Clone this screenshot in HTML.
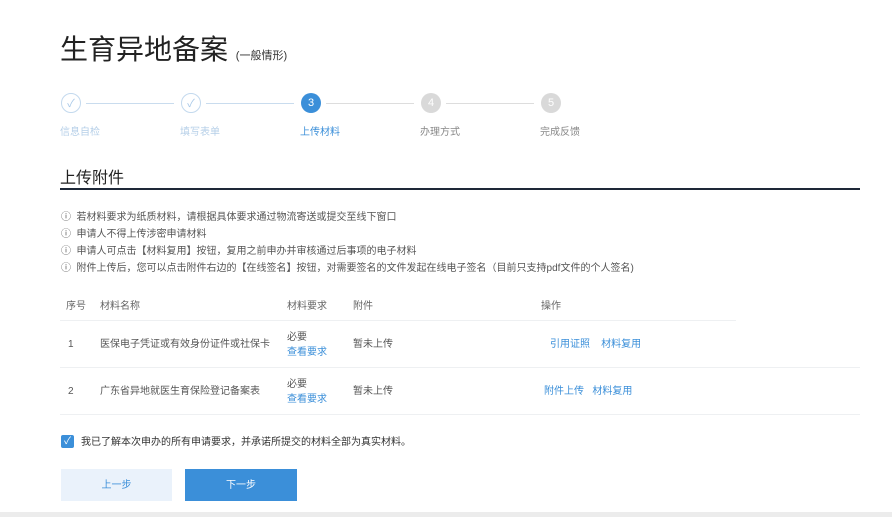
<!DOCTYPE html>
<html><head><meta charset="utf-8"><style>
*{margin:0;padding:0;box-sizing:border-box}
body{width:892px;height:517px;background:#fff;font-family:"Liberation Sans","Noto Sans CJK SC",sans-serif;position:relative;overflow:hidden;color:#333}
.a{position:absolute;white-space:nowrap}
.t{font-size:10px;color:#555;line-height:14px;margin-top:2px}
.circ{position:absolute;width:20px;height:20px;border-radius:50%;top:93px;font-size:11px;color:#fff;text-align:center;line-height:20px}
.line{position:absolute;top:103px;height:1px;background:#c9dcee;width:88px}
.lbl{position:absolute;top:123px;font-size:10px}
.blue{color:#3b8fd9}
.row{position:absolute;left:60px;width:800px;height:1px;background:#eef0f2}
.btn{position:absolute;top:469px;height:32px;font-size:10px;text-align:center;line-height:34px}
</style></head><body>
<div class="a" style="left:60px;top:28px;font-size:28px;color:#222">生育异地备案 <span style="font-size:11px;color:#333">(一般情形)</span></div>

<div class="circ" style="left:61px;border:1px solid #c3d9ee;color:#a9c9e8">✓</div>
<div class="line" style="left:86px"></div>
<div class="circ" style="left:181px;border:1px solid #c3d9ee;color:#a9c9e8">✓</div>
<div class="line" style="left:206px"></div>
<div class="circ" style="left:301px;background:#3b8fd9">3</div>
<div class="line" style="left:326px;background:#ddd"></div>
<div class="circ" style="left:421px;background:#d9d9d9">4</div>
<div class="line" style="left:446px;background:#ddd"></div>
<div class="circ" style="left:541px;background:#d9d9d9">5</div>
<div class="lbl" style="left:60px;color:#b5cfe8">信息自检</div>
<div class="lbl" style="left:180px;color:#b5cfe8">填写表单</div>
<div class="lbl" style="left:300px;color:#3b8fd9">上传材料</div>
<div class="lbl" style="left:420px;color:#888">办理方式</div>
<div class="lbl" style="left:540px;color:#888">完成反馈</div>

<div class="a" style="left:60px;top:164px;font-size:16px;color:#222">上传附件</div>
<div class="a" style="left:60px;top:188px;width:800px;height:2px;background:#1e2838"></div>

<div class="a t" style="left:61px;top:209px">ⓘ&nbsp; 若材料要求为纸质材料，请根据具体要求通过物流寄送或提交至线下窗口</div>
<div class="a t" style="left:61px;top:226px">ⓘ&nbsp; 申请人不得上传涉密申请材料</div>
<div class="a t" style="left:61px;top:243px">ⓘ&nbsp; 申请人可点击【材料复用】按钮，复用之前申办并审核通过后事项的电子材料</div>
<div class="a t" style="left:61px;top:260px">ⓘ&nbsp; 附件上传后，您可以点击附件右边的【在线签名】按钮，对需要签名的文件发起在线电子签名（目前只支持pdf文件的个人签名)</div>

<div class="a t" style="left:66px;top:298px;color:#666">序号</div>
<div class="a t" style="left:100px;top:298px;color:#666">材料名称</div>
<div class="a t" style="left:287px;top:298px;color:#666">材料要求</div>
<div class="a t" style="left:353px;top:298px;color:#666">附件</div>
<div class="a t" style="left:541px;top:298px;color:#666">操作</div>
<div class="row" style="top:320px;width:676px"></div>

<div class="a t" style="left:68px;top:336px">1</div>
<div class="a t" style="left:100px;top:336px">医保电子凭证或有效身份证件或社保卡</div>
<div class="a t" style="left:287px;top:329px">必要</div>
<div class="a t blue" style="left:287px;top:344px">查看要求</div>
<div class="a t" style="left:353px;top:336px">暂未上传</div>
<div class="a t blue" style="left:550px;top:336px">引用证照&nbsp;&nbsp;&nbsp; 材料复用</div>
<div class="row" style="top:367px"></div>

<div class="a t" style="left:68px;top:383px">2</div>
<div class="a t" style="left:100px;top:383px">广东省异地就医生育保险登记备案表</div>
<div class="a t" style="left:287px;top:376px">必要</div>
<div class="a t blue" style="left:287px;top:391px">查看要求</div>
<div class="a t" style="left:353px;top:383px">暂未上传</div>
<div class="a t blue" style="left:544px;top:383px">附件上传&nbsp;&nbsp; 材料复用</div>
<div class="row" style="top:414px"></div>

<div class="a" style="left:61px;top:435px;width:13px;height:13px;background:#3b8fd9;border-radius:2px;color:#fff;font-size:10px;line-height:13px;text-align:center">✓</div>
<div class="a t" style="left:81px;top:434px;color:#333">我已了解本次申办的所有申请要求，并承诺所提交的材料全部为真实材料。</div>

<div class="btn" style="left:61px;width:111px;background:#eaf2fb;color:#3b8fd9">上一步</div>
<div class="btn" style="left:185px;width:112px;background:#3b8fd9;color:#fff">下一步</div>
<div class="a" style="left:0;top:512px;width:892px;height:5px;background:#ececec"></div>
</body></html>
